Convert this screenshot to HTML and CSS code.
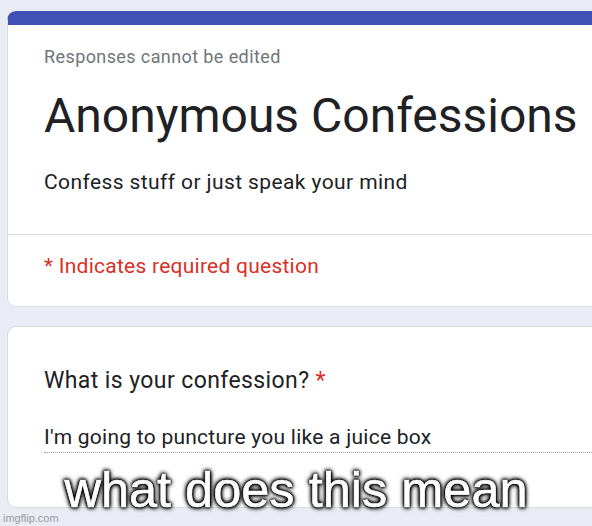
FILE: index.html
```html
<!DOCTYPE html>
<html lang="en">
<head>
  <meta charset="UTF-8" />
  <title>Anonymous Confessions</title>
  <link rel="stylesheet" href="styles.css">
</head>
<body>
  <div class="form-wrap">
    <div class="card head-card">
      <div class="head-top">
        <div class="note">Responses cannot be edited</div>
        <h1>Anonymous Confessions</h1>
        <div class="desc">Confess stuff or just speak your mind</div>
      </div>
      <div class="required">* Indicates required question</div>
    </div>
    <div class="card question-card">
      <div class="question">What is your confession? <span class="star">*</span></div>
      <div class="answer">I'm going to puncture you like a juice box</div>
    </div>
  </div>
  <div class="caption">what does this mean</div>
  <div class="watermark">imgflip.com</div>
</body>
</html>
```

FILE: styles.css
```css
:root {
  --bg: #eaecf5;
  --card: #fff;
  --border: #dadce0;
  --accent: #3f51b5;
  --text: #202124;
  --subtext: #70757a;
  --red: #d93025;
}
html, body { margin: 0; padding: 0; }
body {
  font-family: Roboto, 'Liberation Sans', Arial, sans-serif;
  background: var(--bg);
  width: 592px;
  height: 526px;
  overflow: hidden;
  position: relative;
}
.form-wrap {
  padding: 11px 0 0 7px;
  display: flex;
  flex-direction: column;
  gap: 19px;
  width: 660px;
}
.card {
  background: var(--card);
  border: 1px solid var(--border);
  border-radius: 9px;
  box-sizing: border-box;
}
.head-card {
  border-top: 14px solid var(--accent);
  height: 296px;
}
.head-top {
  padding: 21px 36px 0 36px;
  height: 210px;
  border-bottom: 1px solid var(--border);
  box-sizing: border-box;
}
.note { color: var(--subtext); font-size: 18px; line-height: 22px; letter-spacing: 0.4px; }
h1 {
  font-weight: 400;
  font-size: 48px;
  line-height: 56px;
  color: var(--text);
  margin: 20px 0 0 0;
}
.desc {
  color: var(--text);
  font-size: 21px;
  line-height: 26px;
  letter-spacing: 0.4px;
  margin-top: 25px;
}
.required {
  color: var(--red);
  font-size: 21px;
  letter-spacing: 0.25px;
  padding: 19px 36px 0 36px;
}
.question-card {
  height: 182px;
  padding: 40px 0 0 36px;
}
.question { color: var(--text); font-size: 23px; line-height: 28px; letter-spacing: 0.4px; }
.star { color: var(--red); }
.answer {
  color: var(--text);
  font-size: 21px;
  line-height: 24px;
  letter-spacing: 0.25px;
  margin-top: 30px;
  padding-bottom: 3px;
  border-bottom: 1px dotted #9aa0a6;
}
.caption {
  position: absolute;
  left: 0; right: 0;
  top: 460px;
  text-align: center;
  font-family: 'Liberation Sans', Arial, sans-serif;
  font-size: 50.5px;
  color: #fff;
  -webkit-text-stroke: 0.6px #fff;
  text-shadow: 0 0 2px #000, 0 0 2px #000, 0 0 3px #000, 0 0 4px #000, 1px 1px 5px #000, -1px -1px 5px #000;
}
.watermark {
  position: absolute;
  left: 3px; bottom: 2px;
  font-family: 'Liberation Sans', Arial, sans-serif;
  font-size: 11px;
  color: #9a9a9a;
}
```
